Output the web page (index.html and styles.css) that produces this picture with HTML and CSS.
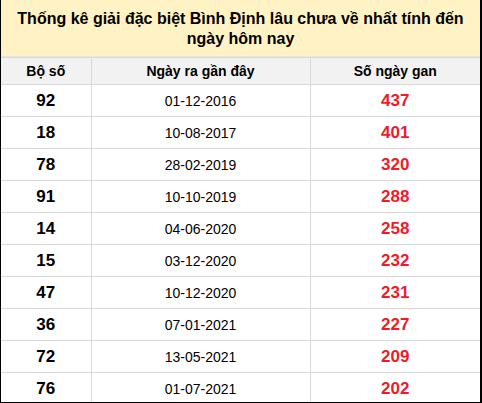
FILE: index.html
```html
<!DOCTYPE html>
<html>
<head>
<meta charset="utf-8">
<link rel="stylesheet" href="styles.css">
</head>
<body>
<div class="wrap">
  <div class="title">Thống kê giải đặc biệt Bình Định lâu chưa về nhất tính đến ngày hôm nay</div>
  <table class="tbl">
    <colgroup><col class="c1"><col class="c2"><col class="c3"></colgroup>
    <thead>
      <tr><th>Bộ số</th><th>Ngày ra gần đây</th><th>Số ngày gan</th></tr>
    </thead>
    <tbody>
      <tr><td class="num">92</td><td class="date">01-12-2016</td><td class="gan">437</td></tr>
      <tr><td class="num">18</td><td class="date">10-08-2017</td><td class="gan">401</td></tr>
      <tr><td class="num">78</td><td class="date">28-02-2019</td><td class="gan">320</td></tr>
      <tr><td class="num">91</td><td class="date">10-10-2019</td><td class="gan">288</td></tr>
      <tr><td class="num">14</td><td class="date">04-06-2020</td><td class="gan">258</td></tr>
      <tr><td class="num">15</td><td class="date">03-12-2020</td><td class="gan">232</td></tr>
      <tr><td class="num">47</td><td class="date">10-12-2020</td><td class="gan">231</td></tr>
      <tr><td class="num">36</td><td class="date">07-01-2021</td><td class="gan">227</td></tr>
      <tr><td class="num">72</td><td class="date">13-05-2021</td><td class="gan">209</td></tr>
      <tr><td class="num">76</td><td class="date">01-07-2021</td><td class="gan">202</td></tr>
    </tbody>
  </table>
</div>
</body>
</html>
```
FILE: styles.css
```css
html, body { margin: 0; padding: 0; background: #fff; }
body { font-family: "Liberation Sans", Arial, sans-serif; color: #000; }
.wrap {
  width: 482px;
  height: 403px;
  box-sizing: border-box;
  border-right: 2px solid #000;
  border-bottom: 1px solid #000;
  border-left: 1px solid #000;
  overflow: hidden;
}
.title {
  background: #fff2c4;
  font-weight: bold;
  font-size: 16px;
  line-height: 20px;
  text-align: center;
  padding: 9px 0 6px;
  height: 41px;
  border-bottom: 1px solid #e6e6e6;
}
.tbl {
  width: 100%;
  border-collapse: collapse;
  table-layout: fixed;
}
.c1 { width: 90px; }
.c2 { width: 219px; }
.tbl th, .tbl td {
  border: 1px solid #d9d9d9;
  text-align: center;
  padding: 0;
}
.tbl tr > :first-child { border-left: none; }
.tbl tr > :last-child { border-right: none; }
.tbl tbody tr:last-child td { border-bottom: none; }
.tbl th {
  background: #f2f2f2;
  height: 26px;
  font-size: 14px;
  font-weight: bold;
}
.tbl td { height: 31px; }
.num { font-size: 17px; font-weight: bold; }
.date { font-size: 14px; }
.gan { font-size: 17px; font-weight: bold; color: #ec1c2a; }
```
